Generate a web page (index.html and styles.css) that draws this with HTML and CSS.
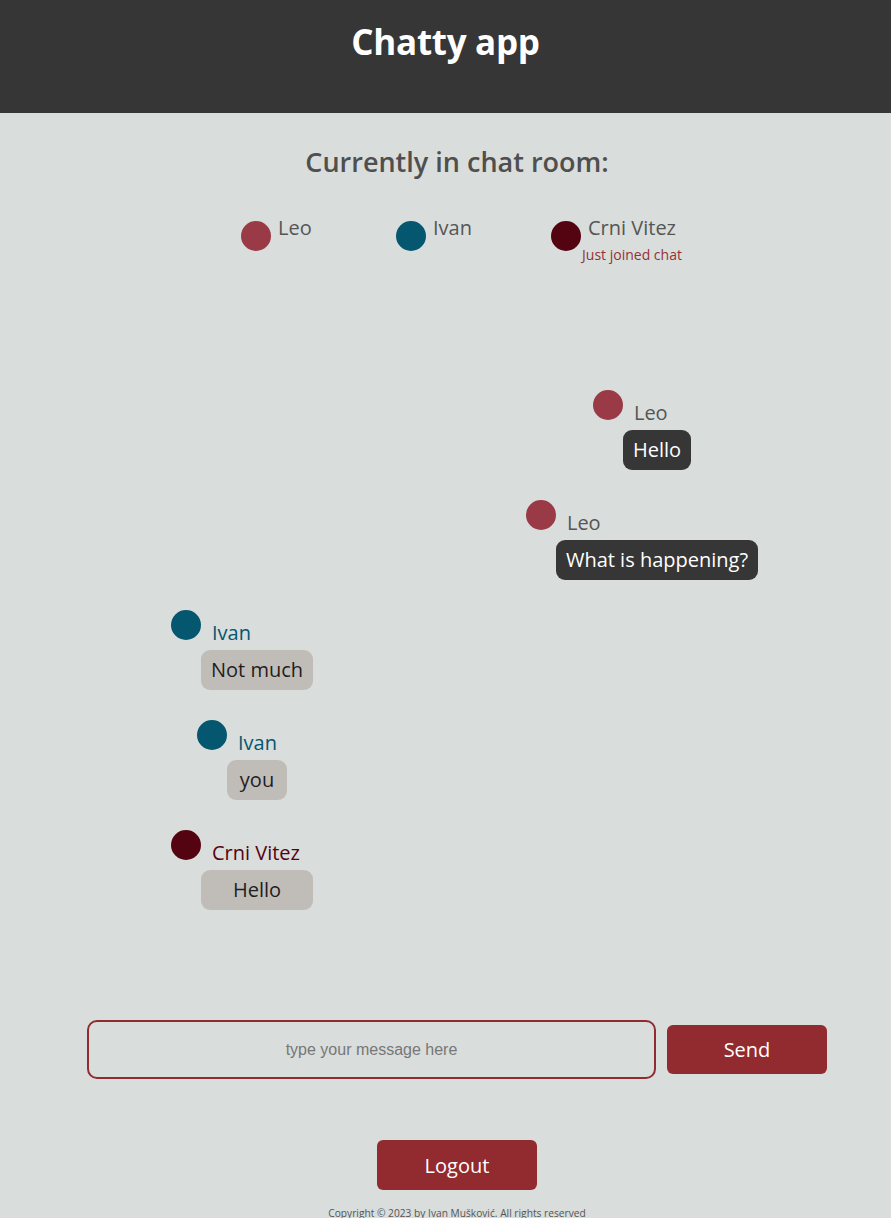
FILE: index.html
```html
<!DOCTYPE html>
<html lang="en">
<head>
<meta charset="utf-8">
<title>Chatty app</title>
<link rel="stylesheet" href="styles.css">
</head>
<body>
<header class="top">
  <h1 class="brand">Chatty app</h1>
</header>
<main class="room">
  <h2 class="room-title">Currently in chat room:</h2>
  <ul class="users">
    <li class="user"><span class="dot dot-leo"></span><span class="user-name">Leo</span></li>
    <li class="user"><span class="dot dot-ivan"></span><span class="user-name">Ivan</span></li>
    <li class="user"><span class="dot dot-crni"></span><span class="user-name">Crni Vitez<span class="status">Just joined chat</span></span></li>
  </ul>

  <div class="messages">
    <div class="msg right">
      <div class="msg-head"><span class="dot dot-leo"></span><span class="msg-name">Leo</span></div>
      <div class="bubble dark">Hello</div>
    </div>
    <div class="msg right">
      <div class="msg-head"><span class="dot dot-leo"></span><span class="msg-name">Leo</span></div>
      <div class="bubble dark">What is happening?</div>
    </div>
    <div class="msg left">
      <div class="msg-head"><span class="dot dot-ivan"></span><span class="msg-name name-ivan">Ivan</span></div>
      <div class="bubble light">Not much</div>
    </div>
    <div class="msg left">
      <div class="msg-head"><span class="dot dot-ivan"></span><span class="msg-name name-ivan">Ivan</span></div>
      <div class="bubble light">you</div>
    </div>
    <div class="msg left">
      <div class="msg-head"><span class="dot dot-crni"></span><span class="msg-name name-crni">Crni Vitez</span></div>
      <div class="bubble light wide">Hello</div>
    </div>
  </div>

  <form class="composer">
    <input class="composer-input" type="text" placeholder="type your message here">
    <button class="btn send" type="button">Send</button>
  </form>

  <div class="logout-wrap">
    <button class="btn logout" type="button">Logout</button>
  </div>
  <p class="copyright">Copyright © 2023 by Ivan Mušković. All rights reserved</p>
</main>
</body>
</html>
```
FILE: styles.css
```css
* { box-sizing: border-box; }

html, body {
  margin: 0;
  padding: 0;
}

body {
  background: #d9dddb;
  font-family: "Open Sans", "Noto Sans", sans-serif;
  color: #555;
  min-height: 1218px;
}

.top {
  background: #363636;
  height: 113px;
  padding-top: 18px;
}

.brand {
  margin: 0;
  text-align: center;
  color: #fff;
  font-size: 35px;
  line-height: 48px;
  font-weight: 700;
  letter-spacing: -0.3px;
}

.room {
  padding-left: 23px;
}

.room-title {
  margin: 31px 0 0;
  text-align: center;
  font-size: 27px;
  line-height: 36px;
  font-weight: 600;
  color: #4f4f4f;
}

.users {
  list-style: none;
  margin: 36px 0 0;
  padding: 0 0 0 33px;
  display: flex;
  justify-content: center;
}

.user {
  width: 155px;
  display: flex;
  align-items: flex-start;
  gap: 7px;
}

.dot {
  flex: none;
  width: 30px;
  height: 30px;
  border-radius: 50%;
}

.user .dot { margin-top: 5px; }

.dot-leo { background: #993a46; }
.dot-ivan { background: #05566f; }
.dot-crni { background: #540311; }

.user-name {
  position: relative;
  font-size: 20px;
  line-height: 24px;
  color: #555;
  white-space: nowrap;
}

.status {
  position: absolute;
  top: calc(100% + 5px);
  left: 50%;
  transform: translateX(-50%);
  font-size: 14px;
  line-height: 20px;
  color: #943237;
  white-space: nowrap;
}

.messages {
  width: 800px;
  margin: 139px auto 0;
  display: grid;
  grid-template-columns: 400px 400px;
  row-gap: 30px;
}

.msg {
  display: flex;
  flex-direction: column;
  justify-self: center;
}

.msg.right { grid-column: 2; }
.msg.left { grid-column: 1; }

.msg-head {
  display: flex;
  height: 40px;
  align-items: flex-start;
}

.msg-head .dot { margin-left: -30px; }

.msg-name {
  margin: 11px 0 0 11px;
  font-size: 20px;
  line-height: 24px;
  color: #555;
  white-space: nowrap;
}

.name-ivan { color: #05566f; }
.name-crni { color: #540311; }

.bubble {
  height: 40px;
  padding: 8px 10px;
  border-radius: 9px;
  font-size: 20px;
  line-height: 24px;
  white-space: nowrap;
  text-align: center;
}

.bubble.dark {
  background: #363636;
  color: #fff;
}

.bubble.light {
  background: #c0bdb8;
  color: #1e1e1e;
  min-width: 60px;
}

.bubble.wide { padding: 8px 32px; }

.composer {
  margin: 110px 0 0;
  display: flex;
  justify-content: center;
  align-items: center;
  gap: 11px;
}

.composer-input {
  width: 569px;
  height: 59px;
  border: 2px solid #922b2f;
  border-radius: 10px;
  background: transparent;
  text-align: center;
  font-family: "Liberation Sans", Arial, sans-serif;
  font-size: 16px;
  color: #333;
  outline: none;
}

.composer-input::placeholder { color: #777; }

.btn {
  background: #922b2f;
  color: #fff;
  border: none;
  border-radius: 6px;
  font-family: "Open Sans", "Noto Sans", sans-serif;
  font-size: 20px;
  width: 160px;
  padding: 0;
}

.send { height: 49px; }

.logout-wrap {
  margin-top: 61px;
  display: flex;
  justify-content: center;
}

.logout { height: 50px; }

.copyright {
  margin: 16px 0 0;
  text-align: center;
  font-size: 10.2px;
  line-height: 14px;
  color: #555;
}
```
